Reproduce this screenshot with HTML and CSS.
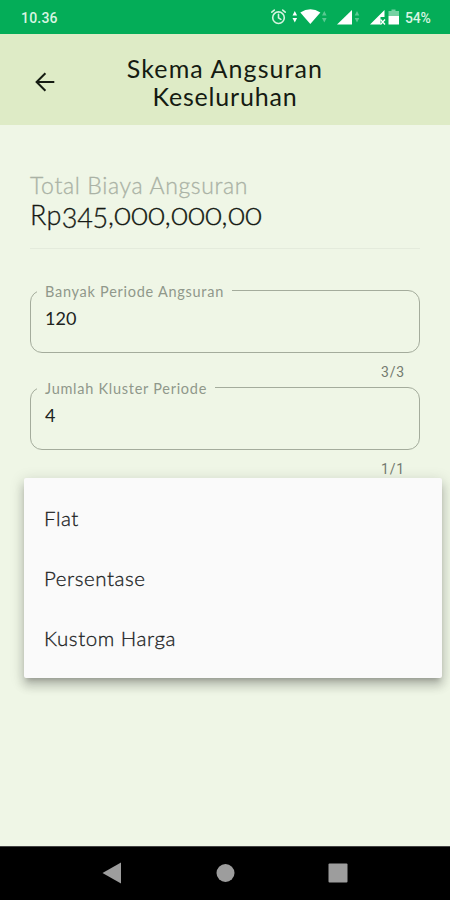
FILE: index.html
```html
<!DOCTYPE html>
<html lang="id">
<head>
<meta charset="utf-8">
<meta name="viewport" content="width=device-width, initial-scale=1">
<title>Skema Angsuran Keseluruhan</title>
<link rel="stylesheet" href="styles.css">
</head>
<body>
<div class="status">
  <span class="time">10.36</span>
  <svg class="status-icons" width="131" height="22" viewBox="0 0 131 22" fill="#fff">
    <g fill="none" stroke="#d5f3df" stroke-width="1.6" stroke-linecap="round">
      <circle cx="8.5" cy="11.7" r="5.8"/>
      <path d="M8.5 8.3v3.6l2.4 1.5M1.8 6.2l2.5-2.1M15.2 6.2l-2.5-2.1"/>
    </g>
    <path d="M22.500 9.500 24.800 5l2.300 4.500zM22.500 12h4.600l-2.300 4.500z"/>
    <path d="M30.300 6.600Q40.500-.1 50.400 6.600L40.300 18z"/>
    <path d="M52 9.500 54.300 5l2.300 4.500zM52 12h4.600l-2.300 4.500z" opacity=".35"/>
    <path d="M67 18.500 82 4v14.500z"/>
    <path d="M84.700 9.500 87 5l2.300 4.500zM84.700 12h4.600L87 16.500z" opacity=".35"/>
    <path d="M100 18.500 114.500 4v7h-4v7.500z"/>
    <path d="m110.500 13.500 4.500 5M115 13.500l-4.500 5" stroke="#fff" stroke-width="1.300"/>
    <path d="M121.500 3.500h4V5h3.500v5h-10.500V5h3z" opacity=".45"/>
    <path d="M118.500 10H129v8.500h-10.500z"/>
  </svg>
  <span class="battery">54%</span>
</div>
<header class="bar">
  <svg class="back" width="20" height="20" viewBox="0 0 20 20" fill="none" stroke="#151b12" stroke-width="2"><path d="M19.300 10H1.600M10.400 1.200 1.600 10l8.800 8.800"/></svg>
  <h1 class="title"><span>Skema Angsuran</span><span class="second">Keseluruhan</span></h1>
</header>
<main class="content">
  <section class="total">
    <div class="total-label">Total Biaya Angsuran</div>
    <div class="amount">Rp<span class="low">345</span>,<span class="zero">000</span>,<span class="zero">000</span>,<span class="zero">00</span></div>
  </section>
  <fieldset class="field">
    <legend>Banyak Periode Angsuran</legend>
    <div class="value">120</div>
  </fieldset>
  <div class="counter">3/3</div>
  <fieldset class="field">
    <legend>Jumlah Kluster Periode</legend>
    <div class="value">4</div>
  </fieldset>
  <div class="counter">1/1</div>
  <ul class="menu">
    <li>Flat</li>
    <li>Persentase</li>
    <li>Kustom Harga</li>
  </ul>
</main>
<nav class="nav">
  <svg width="20" height="22" viewBox="0 0 20 22"><path d="M.5 11 19 .5v21z"/></svg>
  <svg width="20" height="22" viewBox="0 0 20 22"><circle cx="10.500" cy="11" r="9"/></svg>
  <svg width="20" height="22" viewBox="0 0 20 22"><rect x=".5" y="1.500" width="19" height="19" rx="1"/></svg>
</nav>
</body>
</html>
```
FILE: styles.css
```css
* { box-sizing: border-box; }
body {
  margin: 0;
  height: 900px;
  display: flex;
  flex-direction: column;
  background: #eff6e6;
  color: #20241e;
  font-family: Lato, sans-serif;
  overflow: hidden;
}
.status {
  height: 34px;
  display: flex;
  align-items: center;
  padding: 2px 18px 0 21px;
  background: #04ad58;
  color: #d9f5e2;
  font: 500 14px/20px Roboto, sans-serif;
}
.time { letter-spacing: .2px; }
.status-icons { margin: -2px 4px 0 auto; }
.battery { width: 27px; letter-spacing: -.2px; }
.bar {
  height: 91px;
  display: flex;
  align-items: center;
  background: #deebc6;
  padding: 4px 35px 0;
}
.back { flex: none; }
.title {
  flex: 1;
  margin: 0 20px 0 0;
  display: flex;
  flex-direction: column;
  align-items: center;
  color: #151b12;
  font-size: 25px;
  font-weight: 400;
  line-height: 28px;
  letter-spacing: 1.1px;
  white-space: nowrap;
}
.second { letter-spacing: .8px; }
.content {
  position: relative;
  flex: 1;
  padding: 46px 30px 0;
}
.total {
  height: 78px;
  border-bottom: 1px solid #e4ebdc;
}
.total-label {
  color: #aab2a5;
  font-size: 23px;
  font-weight: 300;
  line-height: 28px;
  letter-spacing: .65px;
  -webkit-text-stroke: .3px;
}
.amount {
  font-size: 27px;
  font-weight: 300;
  line-height: 32px;
  color: #151914;
  letter-spacing: .3px;
  white-space: nowrap;
  -webkit-text-stroke: .3px;
}
.low { position: relative; top: 3px; letter-spacing: -.2px; }
.zero {
  display: inline-block;
  width: 50.5px;
  font-size: 23px;
  letter-spacing: 0;
  transform: scaleX(1.27);
  transform-origin: left;
}
.field {
  height: 69px;
  margin: 0;
  min-width: 0;
  border: 1px solid #a4ac9c;
  border-radius: 12px;
  padding: 0 6px;
}
.total + .field { margin-top: 35px; }
.field legend {
  position: relative;
  top: 2px;
  height: 12px;
  padding: 0 8px;
  color: #90988b;
  font-size: 14.5px;
  line-height: 12px;
  letter-spacing: .73px;
}
.value {
  padding: 10px 0 0 8px;
  font-size: 18px;
  line-height: 24px;
}
.counter {
  height: 28px;
  padding: 8px 15px 0 0;
  text-align: right;
  color: #747b70;
  font: 14px/22px Roboto, sans-serif;
  letter-spacing: .8px;
}
.menu {
  position: absolute;
  left: 24px;
  top: 353px;
  width: 418px;
  height: 200px;
  margin: 0;
  padding: 10px 20px;
  list-style: none;
  background: #fafafa;
  border-radius: 2px;
  box-shadow: 0 5px 5px -3px #0003, 0 8px 10px 1px #00000024, 0 3px 14px 2px #0000001f;
  color: #20221f;
  font-size: 20.5px;
  font-weight: 300;
  line-height: 60px;
  letter-spacing: .55px;
  -webkit-text-stroke: .3px;
}
.nav {
  height: 54px;
  display: flex;
  align-items: center;
  justify-content: space-between;
  padding: 0 102px 2px;
  background: #000;
  border-top: 1px solid #444;
  fill: #9d9d9d;
}
```
